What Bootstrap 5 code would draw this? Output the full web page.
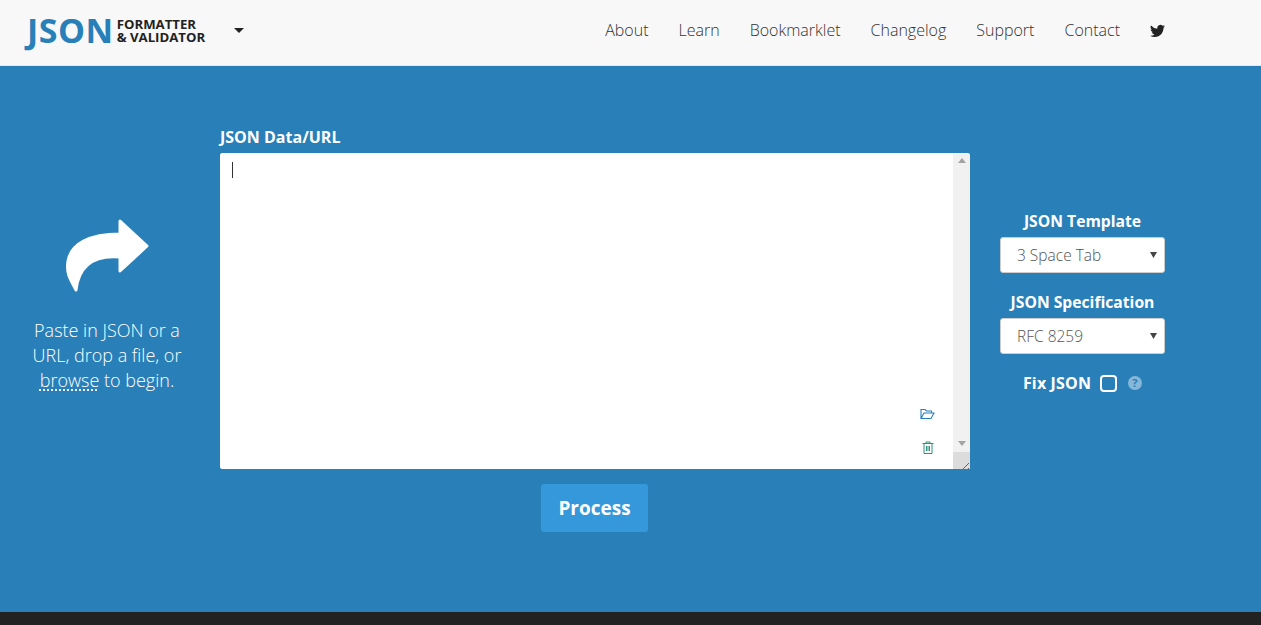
<!DOCTYPE html>
<html lang="en">
<head>
    <meta charset="UTF-8">
    <title>JSON Formatter &amp; Validator</title>
    <link href="https://cdn.jsdelivr.net/npm/bootstrap@5.3.3/dist/css/bootstrap.min.css" rel="stylesheet">
    <style>
        html, body { height: 100%; }
        body {
            background-color: #222222;
            font-family: "Open Sans", "Noto Sans", sans-serif;
            overflow: hidden;
        }
        .top-bar {
            height: 66px;
            padding: 0 96px 4px 27px;
            background-color: #f8f8f8;
            border-bottom: 1px solid #e7e7e7;
        }
        .logo-link { gap: 3px; text-decoration: none; }
        .logo-json { font-size: 34px; font-weight: 700; color: #2980b9; line-height: 1; letter-spacing: .5px; margin-top: -2px; }
        .logo-sub { font-size: 13.2px; font-weight: 700; color: #222; line-height: 13px; }
        .logo-caret {
            width: 0; height: 0; margin-left: 26px;
            border-left: 5px solid transparent;
            border-right: 5px solid transparent;
            border-top: 5px solid #222;
        }
        .top-links { gap: 30px; margin-bottom: 2px; }
        .top-links svg { margin-top: 2px; }
        .top-bar .top-links .nav-link { padding: 0; font-size: 16px; font-weight: 300; color: #333; }
        .work-area {
            height: 546px;
            padding-top: 62px;
            background-color: #2980b9;
            color: #fff;
        }
        .paste-col { width: 214px; padding-top: 91px; }
        .paste-text { font-size: 18px; line-height: 25px; font-weight: 300; margin-top: 25px; }
        .paste-text a { color: #fff; text-decoration: underline dotted; text-underline-offset: 3px; }
        .data-col { width: 750px; margin-left: 6px; }
        .field-label { font-size: 16px; font-weight: 700; line-height: 18px; margin: 0 0 7px; }
        .data-box { height: 316px; background-color: #fff; border-radius: 3px 3px 0 3px; overflow: hidden; }
        .data-input { border: 0; outline: 0; resize: none; padding: 8px 12px; color: #333; }
        .text-caret { position: absolute; left: 12px; top: 9px; width: 1px; height: 16px; background-color: #333; }
        .box-icon { position: absolute; left: 700px; }
        .fake-scroll { width: 17px; background-color: #f1f1f1; }
        .scroll-up, .scroll-down {
            width: 0; height: 0; margin: 5px auto 0;
            border-left: 4px solid transparent;
            border-right: 4px solid transparent;
        }
        .scroll-up { border-bottom: 5px solid #a3a3a3; }
        .scroll-down { border-top: 5px solid #a3a3a3; margin: auto auto 6px; }
        .scroll-corner { height: 17px; background-color: #dcdcdc; }
        .process-btn {
            width: 107px; height: 48px; margin: 15px 1px 0 0; padding: 0;
            background-color: #3498db; border: 0; border-radius: 3px;
            color: #fff; font-size: 19px; font-weight: 700;
        }
        .side-col { width: 165px; margin-left: 30px; padding-top: 83px; text-align: center; }
        .side-label { font-size: 15.7px; font-weight: 700; line-height: 20px; margin-bottom: 6px; }
        .side-select {
            height: 36px; margin-bottom: 19px; padding: 2px 16px 0;
            font-size: 15.500px; font-weight: 300; color: #555;
            border-radius: 3px; border: 1px solid #ccc;
            background-image: url("data:image/svg+xml,%3Csvg xmlns='http://www.w3.org/2000/svg' width='8' height='7'%3E%3Cpath d='M0 0h7l-3.500 6z' fill='%23444'/%3E%3C/svg%3E");
            background-position: right 6px center;
            background-size: 8px 7px;
        }
        .fix-row { margin-top: 19px; font-size: 16px; font-weight: 700; line-height: 20px; letter-spacing: .15px; }
        .fix-check {
            width: 17px; height: 17px; margin: 0 0 0 9px;
            background-color: transparent; border: 2px solid #fff; border-radius: 4px;
        }
        .fix-help {
            width: 14px; height: 14px; margin-left: 11px; border-radius: 50%;
            background-color: #86b7d9; color: #2980b9;
            font-size: 11px; font-weight: 700; line-height: 14px;
        }
    </style>
</head>
<body>
<nav class="navbar navbar-expand top-bar">
    <a class="d-flex align-items-center logo-link" href="#">
        <span class="logo-json">JSON</span>
        <span class="logo-sub"><span class="d-block">FORMATTER</span><span class="d-block">&amp; VALIDATOR</span></span>
        <span class="logo-caret"></span>
    </a>
    <ul class="navbar-nav ms-auto align-items-center top-links">
        <li class="nav-item"><a class="nav-link" href="#">About</a></li>
        <li class="nav-item"><a class="nav-link" href="#">Learn</a></li>
        <li class="nav-item"><a class="nav-link" href="#">Bookmarklet</a></li>
        <li class="nav-item"><a class="nav-link" href="#">Changelog</a></li>
        <li class="nav-item"><a class="nav-link" href="#">Support</a></li>
        <li class="nav-item"><a class="nav-link" href="#">Contact</a></li>
        <li class="nav-item"><a class="nav-link d-flex" href="#">
            <svg width="15" height="15" viewBox="0 0 16 16" fill="#222"><path d="M5.026 15c6.038 0 9.341-5.003 9.341-9.334 0-.14 0-.282-.006-.422A6.685 6.685 0 0 0 16 3.542a6.658 6.658 0 0 1-1.889.518 3.301 3.301 0 0 0 1.447-1.817 6.533 6.533 0 0 1-2.087.793A3.286 3.286 0 0 0 7.875 6.03a9.325 9.325 0 0 1-6.767-3.429 3.289 3.289 0 0 0 1.018 4.382A3.323 3.323 0 0 1 .64 6.575v.045a3.288 3.288 0 0 0 2.632 3.218 3.203 3.203 0 0 1-.865.115 3.23 3.23 0 0 1-.614-.057 3.283 3.283 0 0 0 3.067 2.277A6.588 6.588 0 0 1 .78 13.58a6.32 6.32 0 0 1-.78-.045A9.344 9.344 0 0 0 5.026 15z"/></svg>
        </a></li>
    </ul>
</nav>

<main class="d-flex work-area">
    <div class="text-center paste-col">
        <svg width="84" height="74" viewBox="0 0 84 74" fill="#fff" stroke="#fff" stroke-width="3" stroke-linejoin="round">
            <path d="M55 2 L82 27 L55 52 V38 C32 36 14 44 11 71 C5 60 1 54 3 42 C6 25 24 15 55 15 Z"/>
        </svg>
        <p class="paste-text mb-0">Paste in JSON or a<br>URL, drop a file, or<br><a href="#">browse</a> to begin.</p>
    </div>

    <div class="data-col text-center">
        <div class="field-label text-start">JSON Data/URL</div>
        <div class="d-flex position-relative data-box">
            <textarea class="flex-grow-1 data-input" aria-label="JSON Data/URL"></textarea>
            <span class="text-caret"></span>
            <svg class="box-icon" style="top:255px" width="15" height="12" viewBox="0 0 15 12" fill="none" stroke="#2980b9" stroke-width="1.1">
                <path d="M1 10.500 V1.500 H5 L6.500 3 H11.500 V5 M1 10.500 H11 L14 5 H4 Z"/>
            </svg>
            <svg class="box-icon" style="top:288px;left:702px" width="12" height="13" viewBox="0 0 12 13" fill="none" stroke="#2f9279" stroke-width="1">
                <path d="M.5 2.500 H11.500 M4 2.500 V1 H8 V2.500 M2 2.500 V12.500 H10 V2.500 M4.500 5 V10 M6 5 V10 M7.500 5 V10"/>
            </svg>
            <div class="d-flex flex-column fake-scroll">
                <span class="scroll-up"></span>
                <span class="scroll-down"></span>
                <div class="scroll-corner">
                    <svg width="17" height="17" viewBox="0 0 17 17" stroke="#666" stroke-width="1" fill="none"><path d="M6 16 L16 6 M11 16 L16 11"/></svg>
                </div>
            </div>
        </div>
        <button class="btn process-btn" type="button">Process</button>
    </div>

    <div class="side-col">
        <div class="side-label">JSON Template</div>
        <select class="form-select side-select" aria-label="JSON Template"><option>3 Space Tab</option></select>
        <div class="side-label">JSON Specification</div>
        <select class="form-select side-select" aria-label="JSON Specification"><option>RFC 8259</option></select>
        <div class="d-flex align-items-center justify-content-center fix-row">
            <span>Fix JSON</span>
            <input class="form-check-input fix-check" type="checkbox" aria-label="Fix JSON">
            <span class="fix-help">?</span>
        </div>
    </div>
</main>
<script src="https://cdn.jsdelivr.net/npm/bootstrap@5.3.3/dist/js/bootstrap.bundle.min.js"></script>
</body>
</html>
